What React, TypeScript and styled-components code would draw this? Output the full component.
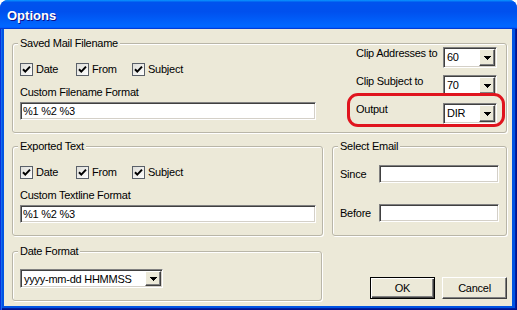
import React from "react";
import styled, { createGlobalStyle } from "styled-components";

const GlobalStyle = createGlobalStyle`
  html, body {
    margin: 0;
    padding: 0;
    background: #ffffff;
  }
  body {
    font-family: "Liberation Sans", Arial, sans-serif;
    font-size: 11px;
    letter-spacing: -0.25px;
    color: #000;
  }
`;

const Window = styled.div`
  width: 517px;
  height: 310px;
  display: flex;
  flex-direction: column;
  border-radius: 8px 8px 0 0;
  overflow: hidden;
  background: #0054e3;
`;

const TitleBar = styled.div`
  height: 29px;
  flex: none;
  display: flex;
  align-items: center;
  padding: 2px 0 0 7px;
  box-sizing: border-box;
  background: linear-gradient(
    180deg,
    #0997ff,
    #0053ee 8%,
    #0050ee 40%,
    #0066ff 88%,
    #0066ff 93%,
    #005bff 95%,
    #003dd7 96%,
    #003dd7
  );
  color: #fff;
  font-weight: bold;
  font-size: 13px;
  letter-spacing: 0;
  text-shadow: 1px 1px #0f1089;
`;

const Frame = styled.div`
  flex: 1;
  display: flex;
  padding: 0 5px 4px 4px;
  background: #0054e3;
  box-shadow: inset 1px 0 #0831d9, inset 2px 0 #166aee, inset -1px -1px #00138c,
    inset -2px -2px #001ea0;
`;

const Body = styled.div`
  flex: 1;
  background: #ece9d8;
  padding: 8px 5px 0 8px;
  display: grid;
  grid-template-columns: 311px 175px;
  column-gap: 9px;
  row-gap: 7px;
  align-content: start;
`;

////

const Group = styled.fieldset<{ $pr?: number; $pb?: number; $wide?: boolean; $w?: number }>`
  margin: 0;
  min-width: 0;
  grid-column: ${({ $wide }) => ($wide ? "1 / -1" : "auto")};
  width: ${({ $w }) => ($w ? `${$w}px` : "auto")};
  box-sizing: border-box;
  border: 1px solid #b9b6a8;
  border-radius: 3px;
  padding: 0 ${({ $pr = 7 }) => $pr}px ${({ $pb = 12 }) => $pb}px 7px;
  box-shadow: inset 1px 1px #fff, 1px 1px #fff;
`;

const Legend = styled.legend`
  padding: 0 2px;
  margin-left: -2px;
  line-height: 13px;
  background: #ece9d8;
`;

const SavedLayout = styled.div`
  display: grid;
  grid-template-columns: 296px auto;
  justify-content: space-between;
`;

const Column = styled.div`
  display: flex;
  flex-direction: column;
`;

const CheckRow = styled.div`
  display: grid;
  grid-template-columns: repeat(3, 56px);
  margin-top: 13px;
  height: 13px;
`;

const CheckItem = styled.label`
  display: flex;
  align-items: center;
  gap: 3px;
  line-height: 13px;
`;

const FieldLabel = styled.div`
  margin-top: 10px;
  line-height: 13px;
`;

const TextBox = styled.input<{ $w: number }>`
  width: ${({ $w }) => $w}px;
  height: 18px;
  margin: 3px 0 0;
  box-sizing: border-box;
  padding: 0 2px;
  font: inherit;
  letter-spacing: inherit;
  color: #000;
  background: #fff;
  border: 1px solid;
  border-color: #808080 #fff #fff #808080;
  box-shadow: inset 1px 1px #404040, inset -1px -1px #d4d0c8;
  outline: none;
`;

const ClipList = styled.div`
  display: flex;
  flex-direction: column;
  gap: 7px;
  margin-top: -3px;
`;

const ClipRow = styled.div`
  display: grid;
  grid-template-columns: 87px 54px;
  align-items: start;
  line-height: 13px;
`;

const OutputRow = styled(ClipRow)`
  position: relative;

  &::after {
    content: "";
    position: absolute;
    top: -10px;
    left: -9px;
    right: -8px;
    bottom: -3px;
    border: 3px solid #e0141e;
    border-radius: 11px;
    pointer-events: none;
  }
`;

const ComboBox = styled.div<{ $w: number; $h?: number }>`
  width: ${({ $w }) => $w}px;
  height: ${({ $h = 21 }) => $h}px;
  box-sizing: border-box;
  display: flex;
  align-items: stretch;
  background: #fff;
  border: 1px solid;
  border-color: #808080 #fff #fff #808080;
  box-shadow: inset 1px 1px #404040, inset -1px -1px #d4d0c8;
  padding: 1px;
`;

const ComboText = styled.span`
  flex: 1;
  display: flex;
  align-items: center;
  padding-left: 2px;
  white-space: nowrap;
  overflow: hidden;
`;

const ComboArrow = styled.span`
  width: 16px;
  flex: none;
  box-sizing: border-box;
  display: flex;
  align-items: center;
  justify-content: center;
  background: #ece9d8;
  border: 1px solid;
  border-color: #fff #404040 #404040 #fff;
  box-shadow: inset -1px -1px #808080;
`;

const DateRow = styled.div`
  margin-top: 11px;
`;

const EmailGrid = styled.div`
  display: grid;
  grid-template-columns: 39px 120px;
  row-gap: 21px;
  align-items: center;
  margin-top: 12px;
  line-height: 13px;
`;

const ButtonRow = styled.div`
  display: flex;
  gap: 7px;
  justify-self: end;
  align-self: end;
  margin-bottom: 2px;
`;

const Button = styled.button<{ $default?: boolean }>`
  width: 65px;
  height: 22px;
  padding: 0;
  font: inherit;
  letter-spacing: inherit;
  color: #000;
  background: #ece9d8;
  border: 1px solid;
  border-color: ${({ $default }) =>
    $default ? "#000" : "#fff #404040 #404040 #fff"};
  box-shadow: ${({ $default }) =>
    $default
      ? "inset 1px 1px #fff, inset -1px -1px #404040, inset -2px -2px #808080"
      : "inset -1px -1px #808080"};
`;

////

function CheckMark(): JSX.Element {
  return (
    <svg width="13" height="13" viewBox="0 0 13 13">
      <defs>
        <linearGradient id="cb" x1="0" y1="0" x2="1" y2="1">
          <stop offset="0" stopColor="#dcdcd6" />
          <stop offset="1" stopColor="#ffffff" />
        </linearGradient>
      </defs>
      <rect x="0.5" y="0.5" width="12" height="12" fill="url(#cb)" stroke="#5a6069" />
      <path d="M3 6.2 L5.3 8.6 L10 3.6" fill="none" stroke="#000" strokeWidth="2" />
    </svg>
  );
}

function Check({ label }: { label: string }): JSX.Element {
  return (
    <CheckItem>
      <CheckMark />
      {label}
    </CheckItem>
  );
}

function Combo({ value, width, height }: { value: string; width: number; height?: number }): JSX.Element {
  return (
    <ComboBox $w={width} $h={height}>
      <ComboText>{value}</ComboText>
      <ComboArrow>
        <svg width="7" height="4" viewBox="0 0 7 4" shapeRendering="crispEdges">
          <path d="M0 0h7v1H0zM1 1h5v1H1zM2 2h3v1H2zM3 3h1v1H3z" fill="#000" />
        </svg>
      </ComboArrow>
    </ComboBox>
  );
}

export default function App(): JSX.Element {
  return (
    <>
      <GlobalStyle />
      <Window>
        <TitleBar>Options</TitleBar>
        <Frame>
          <Body>
            <Group $wide $pr={9} $pb={8}>
              <Legend>Saved Mail Filename</Legend>
              <SavedLayout>
                <Column>
                  <CheckRow>
                    <Check label="Date" />
                    <Check label="From" />
                    <Check label="Subject" />
                  </CheckRow>
                  <FieldLabel>Custom Filename Format</FieldLabel>
                  <TextBox $w={296} readOnly defaultValue="%1 %2 %3" />
                </Column>
                <ClipList>
                  <ClipRow>
                    <span>Clip Addresses to</span>
                    <Combo value="60" width={54} />
                  </ClipRow>
                  <ClipRow>
                    <span>Clip Subject to</span>
                    <Combo value="70" width={54} />
                  </ClipRow>
                  <OutputRow>
                    <span>Output</span>
                    <Combo value="DIR" width={54} />
                  </OutputRow>
                </ClipList>
              </SavedLayout>
            </Group>

            <Group>
              <Legend>Exported Text</Legend>
              <Column>
                <CheckRow>
                  <Check label="Date" />
                  <Check label="From" />
                  <Check label="Subject" />
                </CheckRow>
                <FieldLabel>Custom Textline Format</FieldLabel>
                <TextBox $w={296} readOnly defaultValue="%1 %2 %3" />
              </Column>
            </Group>

            <Group>
              <Legend>Select Email</Legend>
              <EmailGrid>
                <span>Since</span>
                <TextBox $w={120} readOnly defaultValue="" style={{ marginTop: 0 }} />
                <span>Before</span>
                <TextBox $w={120} readOnly defaultValue="" style={{ marginTop: 0 }} />
              </EmailGrid>
            </Group>

            <Group $w={310} style={{ marginTop: 2 }}>
              <Legend>Date Format</Legend>
              <DateRow>
                <Combo value="yyyy-mm-dd HHMMSS" width={143} height={19} />
              </DateRow>
            </Group>

            <ButtonRow>
              <Button $default>OK</Button>
              <Button>Cancel</Button>
            </ButtonRow>
          </Body>
        </Frame>
      </Window>
    </>
  );
}
